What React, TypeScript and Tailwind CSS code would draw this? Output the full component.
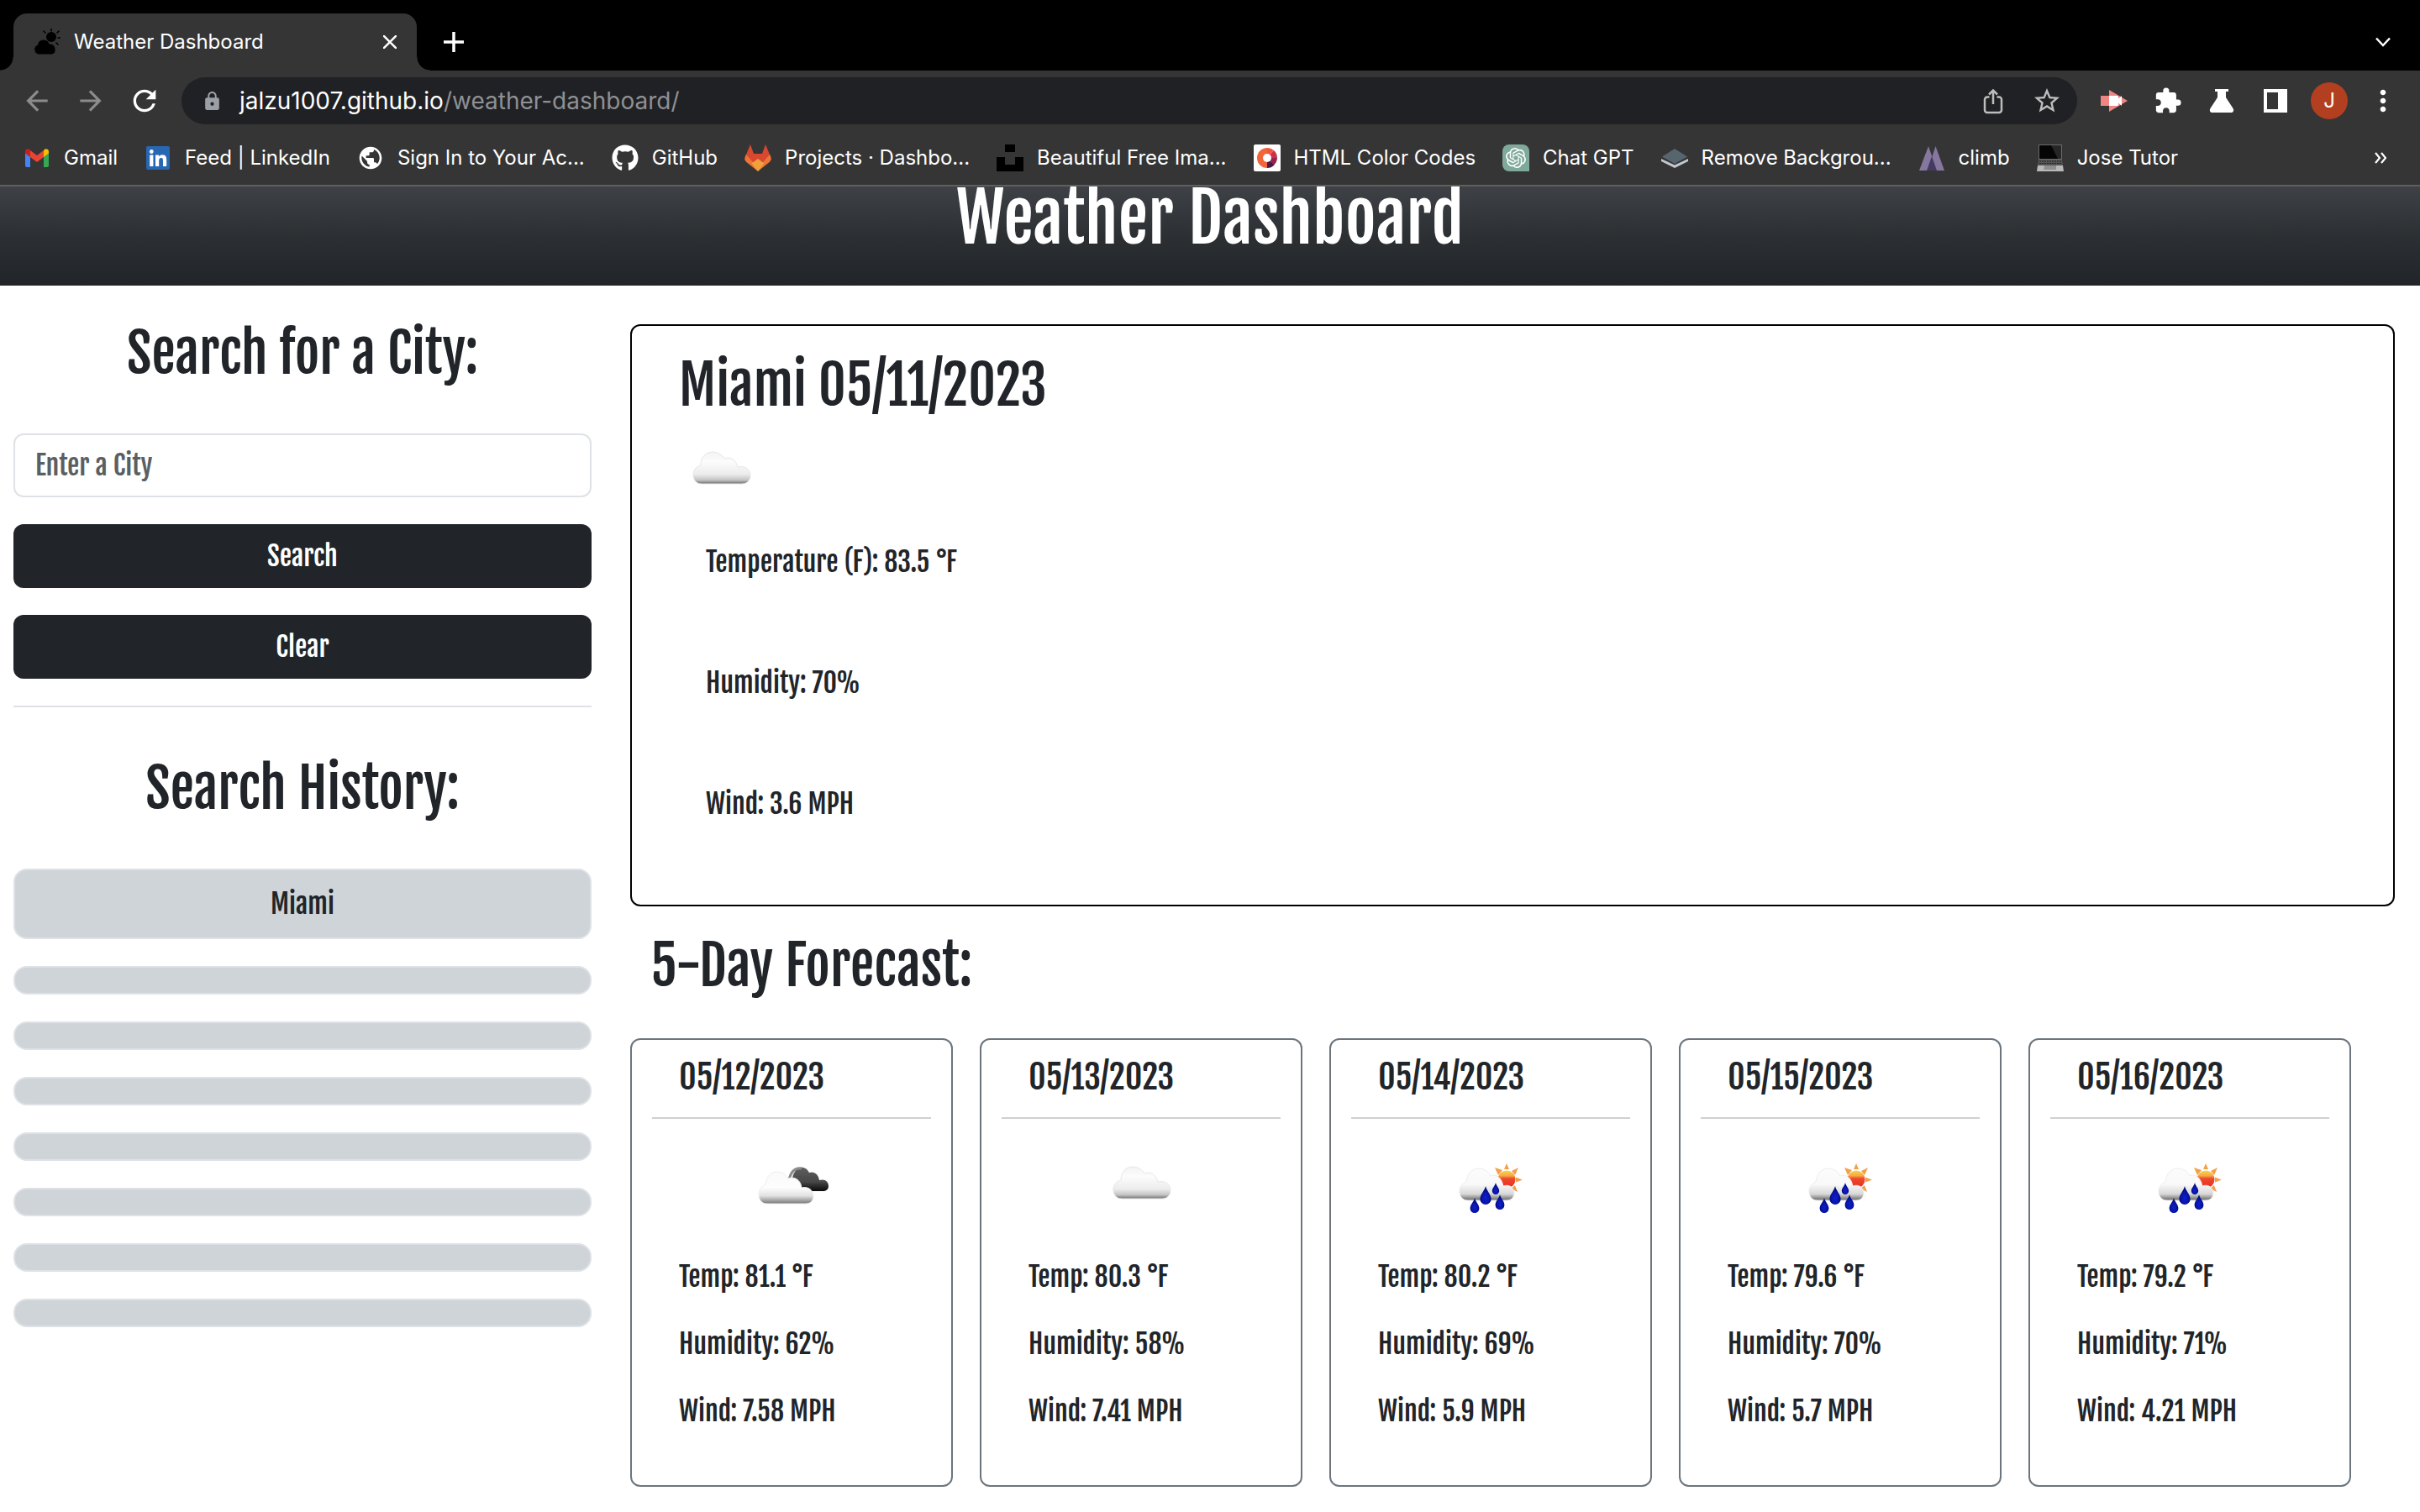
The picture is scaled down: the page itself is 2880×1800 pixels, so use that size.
import { ReactNode } from 'react';
import { FaGithub } from 'react-icons/fa';
import {
  MdArrowBack,
  MdArrowForward,
  MdRefresh,
  MdLock,
  MdStarOutline,
  MdExtension,
  MdPublic,
  MdMoreVert,
} from 'react-icons/md';
import { SiOpenai } from 'react-icons/si';

const CLOUD =
  'M10 38C3 38 0 33 0 27C0 21 4 17 9 16C9 6 15 0 23 0C29 0 34 3 37 8C43 5 51 9 53 18C62 16 68 21 68 28C68 34 64 38 58 38Z';

/* Browser icons */

function Favicon() {
  return (
    <svg viewBox="0 0 32 32" className="size-8">
      <circle cx="21" cy="10" r="6" />
      <path
        d="M21 0v3M12 3l2 2M30 3l-2 2M32 11h-3M29 19l-2-2"
        stroke="black"
        strokeWidth="1.6"
        strokeLinecap="round"
      />
      <path
        d="M6 31a6 6 0 0 1-1.500-11.500A7 7 0 0 1 12 13a8 8 0 0 1 7 5a6.500 6.500 0 0 1 7 6.500A6 6 0 0 1 22 31Z"
        stroke="#353535"
        strokeWidth="1"
      />
    </svg>
  );
}

function GmailIcon() {
  return (
    <svg viewBox="0 0 32 32" className="size-8">
      <path d="M2 10v15a2 2 0 0 0 2 2h4V14.500Z" fill="#4285f4" />
      <path d="M30 10v15a2 2 0 0 1-2 2h-4V14.500Z" fill="#34a853" />
      <path d="M24 7.500V15l6-4.500V8.500C30 5.600 26.700 4.500 24.700 6Z" fill="#fbbc04" />
      <path d="M8 15V7l8 6 8-6v8l-8 6Z" fill="#ea4335" />
      <path d="M2 8.500v2L8 15V7L7.300 6C5.300 4.500 2 5.600 2 8.500Z" fill="#c5221f" />
    </svg>
  );
}

function LinkedInIcon() {
  return (
    <svg viewBox="0 0 32 32" className="size-8">
      <rect x="2" y="2" width="28" height="28" rx="2" fill="#2867b2" />
      <circle cx="8.300" cy="8.500" r="2.400" fill="white" />
      <rect x="6.200" y="12.500" width="4.200" height="13.500" fill="white" />
      <path
        d="M13 12.500h4v1.900c.6-1.200 2.100-2.200 4.200-2.200 4.200 0 5 2.800 5 6.400V26H22v-6.500c0-1.600 0-3.600-2.200-3.600s-2.600 1.700-2.600 3.500V26H13Z"
        fill="white"
      />
    </svg>
  );
}

function GitLabIcon() {
  return (
    <svg viewBox="0 0 32 32" className="size-8">
      <path d="M7 0 2 12 0 18l8 5h16l8-5-2-6-5-12-4 11H11Z" fill="#d8482e" />
      <path d="M2 12c-3 5-1 8 1 9.500L16 32l-3.500-8Z" fill="#ee7537" />
      <path d="M30 12c3 5 1 8-1 9.500L16 32l3.500-8Z" fill="#ee7537" />
      <path d="M16 17 8.500 22.500 16 32l7.500-9.500Z" fill="#f0a13c" />
    </svg>
  );
}

function UnsplashIcon() {
  return (
    <svg viewBox="0 0 32 32" className="size-8">
      <path d="M10 0h12v9H10zM0 15h10v9h12v-9h10v17H0z" />
    </svg>
  );
}

function ColorCodesIcon() {
  return (
    <svg viewBox="0 0 32 32" className="size-8">
      <rect width="32" height="32" rx="2" fill="white" />
      <path d="M16 28A12 12 0 0 1 16 4Z" fill="#f2653a" />
      <path d="M16 4a12 12 0 0 1 8 3L16 16Z" fill="#f0553d" />
      <path d="M24 7a12 12 0 0 1 4 9H16Z" fill="#cf2f4a" />
      <path d="M28 16a12 12 0 0 1-4 8.500L16 16Z" fill="#96224f" />
      <path d="M24.500 24.500A12 12 0 0 1 16 28V16Z" fill="#4a1a45" />
      <circle cx="16" cy="16" r="5" fill="white" />
    </svg>
  );
}

function ChatIcon() {
  return (
    <span className="flex size-8 items-center justify-center rounded-l-lg rounded-tr-lg bg-[#7fa99b] text-white">
      <SiOpenai size={24} />
    </span>
  );
}

function LayersIcon() {
  return (
    <svg viewBox="0 0 32 32" className="size-8">
      <path d="M0 17v3l16 8 16-8v-3l-16 7.500Z" fill="#c3c9cf" />
      <path d="M16 5 31 14.500 16 23 1 14.500Z" fill="#57656f" />
    </svg>
  );
}

function ClimbIcon() {
  return (
    <svg viewBox="0 0 32 32" className="size-8">
      <path d="M12 2 22 31H1Z" fill="#85779e" />
      <path d="M20.500 2 31 31H11Z" fill="#85779e" />
      <path d="m16 14 6 17H10Z" fill="#463a63" />
    </svg>
  );
}

function LaptopIcon() {
  return (
    <svg viewBox="0 0 32 32" className="size-8">
      <path d="M2 0h28v18H2Z" fill="#6b6b6b" />
      <path d="M3 1h26v16H3Z" fill="#050505" />
      <path d="M17 1h12v16h-4Z" fill="#262626" />
      <path d="M2 18h28l1 7H1Z" fill="#555" />
      <path d="M3 20h26M3 22.500h26" stroke="#222" strokeWidth="1" strokeDasharray="2 1" />
      <path d="M1 25h30l1 7H0Z" fill="#b9b9b9" />
      <path d="M9 25h14v5H8Z" fill="#8f8f8f" />
    </svg>
  );
}

function ShareIcon() {
  return (
    <svg viewBox="0 0 32 32" className="size-8" fill="none" stroke="#bdbdbd" strokeWidth="2.500">
      <path d="M11.500 11.500H9A3 3 0 0 0 6 14.500V27a3 3 0 0 0 3 3h14a3 3 0 0 0 3-3V14.500a3 3 0 0 0-3-3h-2.500" />
      <path d="M16 20V3.500M11 8.500l5-5 5 5" />
    </svg>
  );
}

function RecorderIcon() {
  return (
    <svg viewBox="0 0 32 32" className="size-8">
      <path d="M0 10h10V3l22 13-22 13v-7H0Z" fill="#f08683" />
      <path d="M10 10h9.500q1.500 0 1.500 1.500v2l4-3.500v12l-4-3.500v2q0 1.500-1.500 1.500H10Z" fill="white" />
    </svg>
  );
}

function FlaskIcon() {
  return (
    <svg viewBox="0 0 32 32" className="size-8">
      <path
        d="M8 2h16v3h-3v7l8.500 13c1.500 2.500.2 5-2 5h-23c-2.200 0-3.500-2.500-2-5L11 12V5H8Z"
        fill="white"
      />
    </svg>
  );
}

function PanelIcon() {
  return (
    <svg viewBox="0 0 32 32" className="size-8">
      <path d="M2 2h28v28H2Zm4 4v20h13V6Z" fill="white" fillRule="evenodd" />
    </svg>
  );
}

/* Weather pictures */

function CloudPicture() {
  return (
    <svg viewBox="0 0 100 100" className="size-[100px]" role="img" aria-label="Overcast clouds">
      <defs>
        <linearGradient id="overcast" x1="0" y1="0" x2="0" y2="1">
          <stop offset="0" stopColor="#f3f3f3" />
          <stop offset="0.300" stopColor="#fcfcfc" />
          <stop offset="0.700" stopColor="#ececec" />
          <stop offset="0.880" stopColor="#c4c4c4" />
          <stop offset="1" stopColor="#6e6e6e" />
        </linearGradient>
        <filter id="soft" x="-10%" y="-10%" width="120%" height="120%">
          <feGaussianBlur stdDeviation="0.700" />
        </filter>
      </defs>
      <path
        d={CLOUD}
        transform="translate(17 25)"
        fill="url(#overcast)"
        stroke="#e6e6e6"
        strokeWidth="1"
        filter="url(#soft)"
      />
    </svg>
  );
}

function BrokenCloudsPicture() {
  return (
    <svg viewBox="0 0 100 100" className="size-[100px]" role="img" aria-label="Broken clouds">
      <defs>
        <linearGradient id="broken-front" x1="0" y1="0" x2="0" y2="1">
          <stop offset="0" stopColor="#fafafa" />
          <stop offset="0.500" stopColor="#fdfdfd" />
          <stop offset="0.750" stopColor="#e2e2e2" />
          <stop offset="1" stopColor="#777777" />
        </linearGradient>
        <linearGradient id="broken-back" x1="0" y1="0" x2="0" y2="1">
          <stop offset="0" stopColor="#5e5e5e" />
          <stop offset="0.600" stopColor="#484848" />
          <stop offset="1" stopColor="#0a0a0a" />
        </linearGradient>
        <filter id="soft-broken" x="-10%" y="-10%" width="120%" height="120%">
          <feGaussianBlur stdDeviation="0.600" />
        </filter>
      </defs>
      <g filter="url(#soft-broken)">
        <path
          d="M53 54C50 45 50 36 54 31C57 24 67 24 71 32C77 30 82 34 83 41C90 39 94 43 94 48C94 52 91 54 87 54Z"
          fill="url(#broken-back)"
        />
        <path d="M47 41C49 31 54 26 62 27" fill="none" stroke="#8a8a8a" strokeWidth="3" />
        <path
          d="M21 69C14 69 11 64 11 58C11 52 15 48 19 46C20 37 25 31 33 31C39 31 43 34 46 39C54 36 61 41 62 50C70 48 76 53 76 60C76 65 73 69 67 69Z"
          fill="url(#broken-front)"
          stroke="#efefef"
          strokeWidth="1"
        />
      </g>
    </svg>
  );
}

function Drop({ x, y, s }: { x: number; y: number; s: number }) {
  return (
    <path
      d="M0-10C1-5 6-1 6 4A6 6 0 0 1-6 4C-6-1-1-5 0-10Z"
      transform={`translate(${x} ${y}) scale(${s})`}
      fill="url(#drop)"
    />
  );
}

function SunShowerPicture() {
  return (
    <svg viewBox="0 0 100 100" className="size-[100px]" role="img" aria-label="Rain with sun">
      <defs>
        <linearGradient id="sun" x1="0" y1="0" x2="0" y2="1">
          <stop offset="0" stopColor="#f6d54a" />
          <stop offset="0.300" stopColor="#f6a843" />
          <stop offset="0.450" stopColor="#ee4a2c" />
          <stop offset="1" stopColor="#e8291f" />
        </linearGradient>
        <linearGradient id="rain-cloud" x1="0" y1="0" x2="0" y2="1">
          <stop offset="0" stopColor="#fcfcfc" />
          <stop offset="0.500" stopColor="#f9f9f9" />
          <stop offset="0.800" stopColor="#d8d8d8" />
          <stop offset="1" stopColor="#666666" />
        </linearGradient>
        <radialGradient id="drop" cx="0.500" cy="0.650" r="0.600">
          <stop offset="0" stopColor="#0a1fd0" />
          <stop offset="0.600" stopColor="#0612a0" />
          <stop offset="1" stopColor="#030655" />
        </radialGradient>
        <filter id="soft-rain" x="-10%" y="-10%" width="120%" height="120%">
          <feGaussianBlur stdDeviation="0.500" />
        </filter>
      </defs>
      <g filter="url(#soft-rain)">
        <path
          d="M66 28 69 21 72 28ZM75 30 83 26 79 35ZM80 37.500 88 40.500 80 43.500ZM79 47 82 55 74 51ZM64 29 55 26 59 35Z"
          fill="#f3a04a"
        />
        <circle cx="69" cy="40" r="10.500" fill="url(#sun)" />
        <path
          d="M23 65C16 65 13 60 13 54C13 49 16 45 21 43C22 33 28 27 36 27C42 27 47 30 50 36C57 33 63 38 65 48C73 45 78 51 78 56C78 61 75 65 69 65Z"
          fill="url(#rain-cloud)"
          stroke="#ececec"
          strokeWidth="1"
        />
        <Drop x={31} y={71} s={0.9} />
        <Drop x={44} y={59} s={1.1} />
        <Drop x={56} y={51} s={0.7} />
        <Drop x={61} y={67} s={0.9} />
      </g>
    </svg>
  );
}

/* Data */

const bookmarks: { label: string; icon: ReactNode }[] = [
  { label: 'Gmail', icon: <GmailIcon /> },
  { label: 'Feed | LinkedIn', icon: <LinkedInIcon /> },
  { label: 'Sign In to Your Ac...', icon: <MdPublic size={32} /> },
  { label: 'GitHub', icon: <FaGithub size={32} /> },
  { label: 'Projects · Dashbo...', icon: <GitLabIcon /> },
  { label: 'Beautiful Free Ima...', icon: <UnsplashIcon /> },
  { label: 'HTML Color Codes', icon: <ColorCodesIcon /> },
  { label: 'Chat GPT', icon: <ChatIcon /> },
  { label: 'Remove Backgrou...', icon: <LayersIcon /> },
  { label: 'climb', icon: <ClimbIcon /> },
  { label: 'Jose Tutor', icon: <LaptopIcon /> },
];

const forecast = [
  { date: '05/12/2023', picture: <BrokenCloudsPicture />, temp: '81.1', humidity: 62, wind: '7.58' },
  { date: '05/13/2023', picture: <CloudPicture />, temp: '80.3', humidity: 58, wind: '7.41' },
  { date: '05/14/2023', picture: <SunShowerPicture />, temp: '80.2', humidity: 69, wind: '5.9' },
  { date: '05/15/2023', picture: <SunShowerPicture />, temp: '79.6', humidity: 70, wind: '5.7' },
  { date: '05/16/2023', picture: <SunShowerPicture />, temp: '79.2', humidity: 71, wind: '4.21' },
];

const emptySlots = ['2', '3', '4', '5', '6', '7', '8'];

/* Browser frame */

function ToolButton({ label, children }: { label: string; children: ReactNode }) {
  return (
    <button type="button" aria-label={label} className="flex h-16 w-16 shrink-0 items-center justify-center">
      {children}
    </button>
  );
}

function TabStrip() {
  return (
    <div className="flex h-[84px] items-end bg-black">
      <div className="size-4 bg-[radial-gradient(circle_at_top_left,#000_15px,#353535_16px)]" />
      <div className="flex h-[68px] w-[480px] items-center rounded-t-2xl bg-[#353535] pr-4 pl-6">
        <Favicon />
        <span className="ml-4 flex-1 text-[24px]">Weather Dashboard</span>
        <button type="button" aria-label="Close tab" className="flex size-8 items-center justify-center">
          <svg viewBox="0 0 16 16" className="size-4" stroke="white" strokeWidth="2.500">
            <path d="M0 0 16 16M16 0 0 16" />
          </svg>
        </button>
      </div>
      <div className="size-4 bg-[radial-gradient(circle_at_top_right,#000_15px,#353535_16px)]" />
      <button type="button" aria-label="New tab" className="ml-3 flex h-[68px] w-8 items-center justify-center">
        <svg viewBox="0 0 24 24" className="size-6" stroke="white" strokeWidth="3.500">
          <path d="M12 0v24M0 12h24" />
        </svg>
      </button>
      <button
        type="button"
        aria-label="Search tabs"
        className="mr-7 ml-auto flex h-[68px] w-8 items-center justify-center"
      >
        <svg viewBox="0 0 18 12" className="w-[18px]" fill="none" stroke="white" strokeWidth="2.500">
          <path d="m1 1.500 8 8.500 8-8.500" />
        </svg>
      </button>
    </div>
  );
}

function Toolbar() {
  return (
    <div className="flex h-[72px] items-center px-3">
      <ToolButton label="Back">
        <MdArrowBack size={38} className="text-[#8c8c8c]" />
      </ToolButton>
      <ToolButton label="Forward">
        <MdArrowForward size={38} className="text-[#8c8c8c]" />
      </ToolButton>
      <ToolButton label="Reload">
        <MdRefresh size={40} />
      </ToolButton>
      <div className="mx-3 flex h-14 flex-1 items-center rounded-full bg-[#202124] pr-1 pl-6">
        <MdLock size={25} className="text-[#9aa0a6]" />
        <a href="https://jalzu1007.github.io/weather-dashboard/" className="ml-5 flex-1 text-[28px] text-[#8f9093]">
          <span className="text-white">jalzu1007.github.io</span>/weather-dashboard/
        </a>
        <ToolButton label="Share">
          <ShareIcon />
        </ToolButton>
        <ToolButton label="Bookmark this page">
          <MdStarOutline size={36} className="text-[#bdbdbd]" />
        </ToolButton>
      </div>
      <ToolButton label="Screen recorder">
        <RecorderIcon />
      </ToolButton>
      <ToolButton label="Extensions">
        <MdExtension size={34} />
      </ToolButton>
      <ToolButton label="Labs">
        <FlaskIcon />
      </ToolButton>
      <ToolButton label="Side panel">
        <PanelIcon />
      </ToolButton>
      <ToolButton label="Profile">
        <span className="flex size-11 items-center justify-center rounded-full bg-[#b23f20] text-[24px]">J</span>
      </ToolButton>
      <ToolButton label="Menu">
        <MdMoreVert size={40} />
      </ToolButton>
    </div>
  );
}

function BookmarksBar() {
  return (
    <nav className="flex h-[66px] items-center gap-8 border-b-2 border-[#5f5f5f] px-7 text-[24px] whitespace-nowrap">
      {bookmarks.map((b) => (
        <a key={b.label} href="#" className="flex items-center gap-4">
          {b.icon}
          <span>{b.label}</span>
        </a>
      ))}
      <button type="button" aria-label="More bookmarks" className="mr-3 ml-auto">
        <svg viewBox="0 0 14 14" className="size-[14px]" fill="none" stroke="white" strokeWidth="2.200">
          <path d="m1 1 5 6-5 6M8 1l5 6-5 6" />
        </svg>
      </button>
    </nav>
  );
}

/* Page */

function Sidebar() {
  return (
    <aside className="w-1/4 px-4 pt-[42px] text-center">
      <h2 className="text-[64px] leading-[77px]">
        <label htmlFor="city">Search for a City:</label>
      </h2>
      <form onSubmit={(e) => e.preventDefault()} className="mt-[57px] flex flex-col gap-8">
        <input
          id="city"
          type="text"
          placeholder="Enter a City"
          className="h-[76px] rounded-xl border-2 border-[#dee2e6] px-6 placeholder:text-[#5b5f63]"
        />
        <button type="submit" className="h-[76px] rounded-xl bg-[#212529] text-white">
          Search
        </button>
        <button type="button" className="h-[76px] rounded-xl bg-[#212529] text-white">
          Clear
        </button>
      </form>
      <hr className="mt-8 border-t-2 border-[#dee2e6]" />
      <h2 className="mt-[58px] text-[64px] leading-[77px]">Search History:</h2>
      <div className="mt-[57px] flex flex-col gap-8">
        <button type="button" className="h-[84px] rounded-2xl border-2 border-[#dee2e6] bg-[#ced4d8]">
          Miami
        </button>
        {emptySlots.map((slot) => (
          <button
            key={slot}
            type="button"
            aria-label={`Empty history slot ${slot}`}
            className="h-[34px] rounded-2xl border-2 border-[#dee2e6] bg-[#ced4d8]"
          />
        ))}
      </div>
    </aside>
  );
}

function Today() {
  return (
    <section className="rounded-xl border-2 border-black px-14 pt-8 pb-24">
      <h2 className="text-[64px] leading-[77px]">Miami 05/11/2023</h2>
      <div className="mt-4">
        <CloudPicture />
      </div>
      <div className="mt-8 flex flex-col gap-24 px-8">
        <p>Temperature (F): 83.5 °F</p>
        <p>Humidity: 70%</p>
        <p>Wind: 3.6 MPH</p>
      </div>
    </section>
  );
}

function Forecast() {
  return (
    <section>
      <h2 className="px-6 pt-8 text-[64px] leading-[77px]">5-Day Forecast:</h2>
      <div className="mt-12 grid grid-cols-5 gap-8 pr-[52px]">
        {forecast.map((day) => (
          <article key={day.date} className="rounded-xl border-2 border-[#6c757d] px-6 pt-5 pb-16">
            <h3 className="px-8 text-[40px] leading-[48px]">{day.date}</h3>
            <hr className="mt-6 border-t-2 border-[#cfd0d1]" />
            <div className="mt-8 flex justify-center">{day.picture}</div>
            <div className="mt-8 flex flex-col gap-8 px-8">
              <p>Temp: {day.temp} °F</p>
              <p>Humidity: {day.humidity}%</p>
              <p>Wind: {day.wind} MPH</p>
            </div>
          </article>
        ))}
      </div>
    </section>
  );
}

export default function App() {
  return (
    <div className="min-h-screen bg-white">
      <div className="bg-[#353535] font-['Inter',sans-serif] text-white">
        <TabStrip />
        <Toolbar />
        <BookmarksBar />
      </div>
      <div className="font-['Fjalla_One','Roboto_Condensed',sans-serif] text-[32px] leading-[48px] text-[#212529]">
        <header className="flex h-[118px] items-end justify-center overflow-hidden bg-linear-to-b from-[#3e4146] via-[#2c3033] to-[#212429] pb-8">
          <h1 className="text-[80px] leading-[96px] text-white">Weather Dashboard</h1>
        </header>
        <div className="flex">
          <Sidebar />
          <main className="w-3/4 px-[30px] pt-[46px]">
            <Today />
            <Forecast />
          </main>
        </div>
      </div>
    </div>
  );
}
